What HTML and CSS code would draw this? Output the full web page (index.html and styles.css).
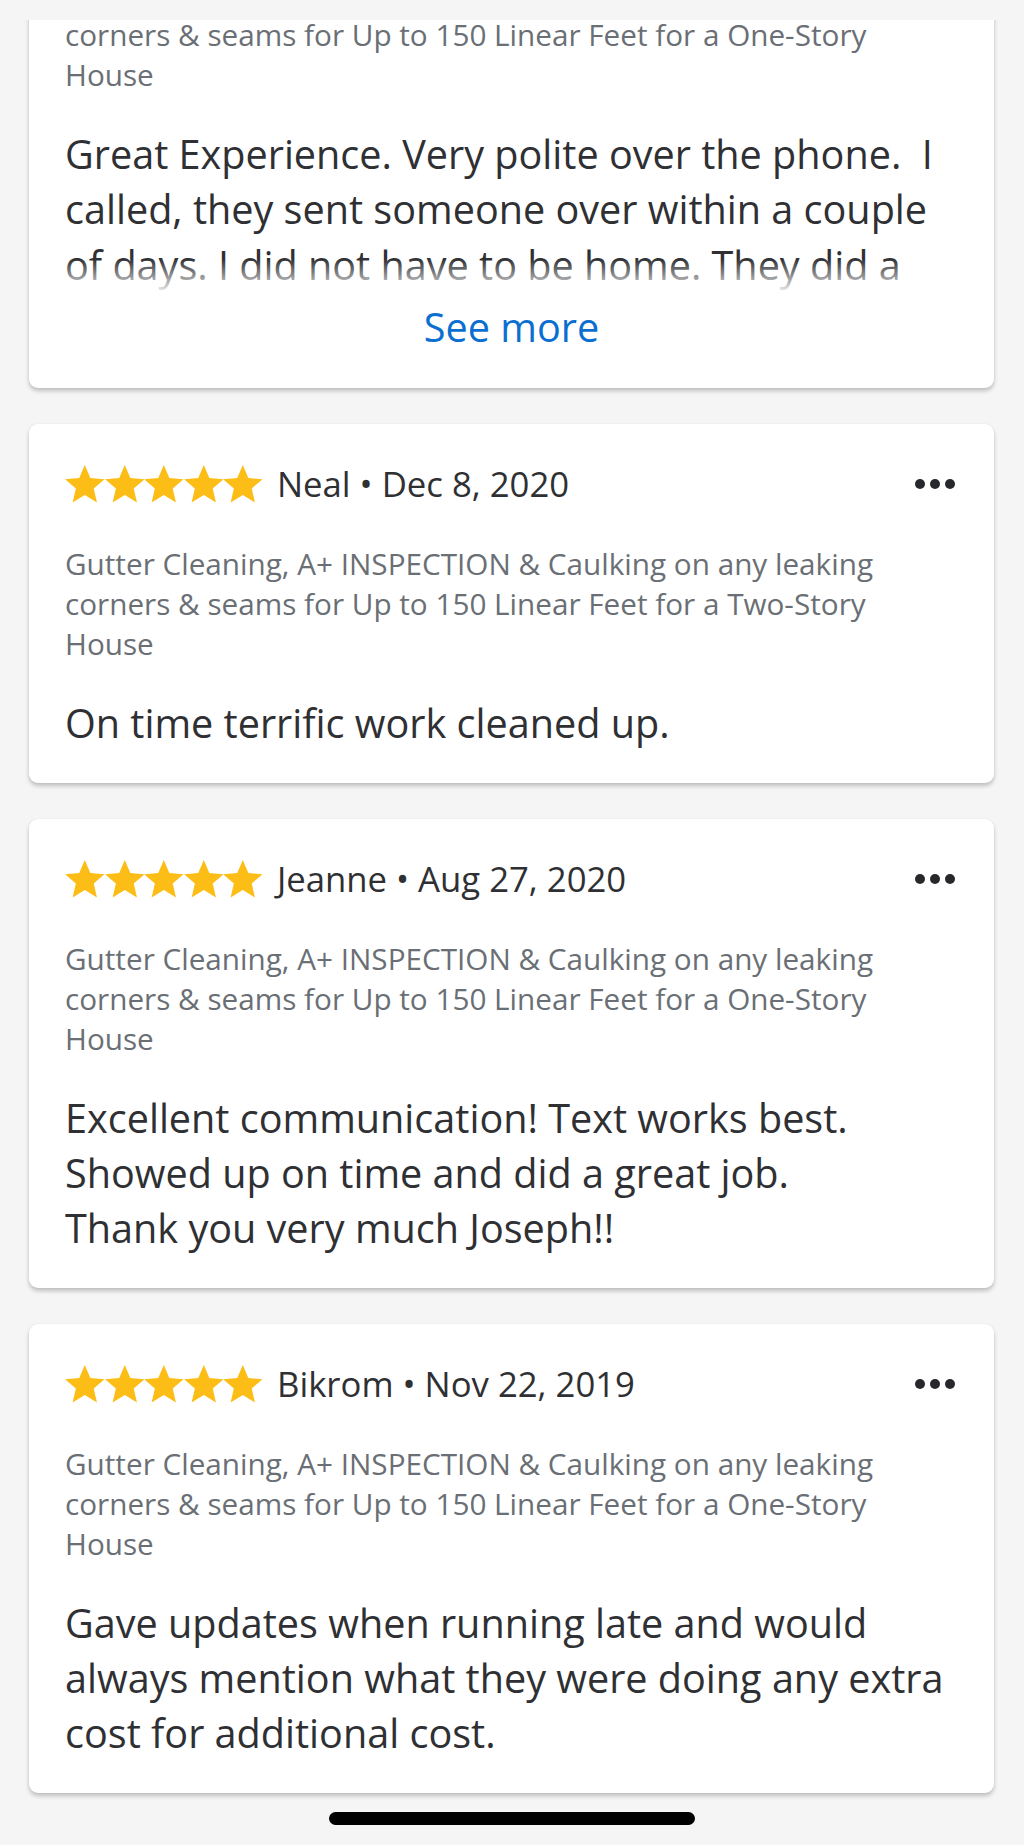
FILE: index.html
```html
<!DOCTYPE html>
<html lang="en">
<head>
<meta charset="utf-8">
<title>Reviews</title>
<link rel="stylesheet" href="styles.css">
</head>
<body>
<div class="screen">
  <div class="viewport">
    <div class="list">
      <article class="card card-partial">
        <p class="service">Gutter Cleaning, A+ INSPECTION &amp; Caulking on any leaking corners &amp; seams for Up to 150 Linear Feet for a One-Story House</p>
        <div class="clamp">
          <p class="review">Great Experience. Very polite over the phone.&nbsp; I called, they sent someone over within a couple of days. I did not have to be home. They did a great job and were very thorough.</p>
        </div>
        <a class="see-more">See more</a>
      </article>

      <article class="card">
        <div class="head">
          <div class="stars">
            <svg viewBox="2 2 20 19.3"><path d="M12 17.27L18.18 21l-1.64-7.03L22 9.24l-7.19-.61L12 2 9.19 8.63 2 9.24l5.46 4.73L5.82 21z"/></svg>
            <svg viewBox="2 2 20 19.3"><path d="M12 17.27L18.18 21l-1.64-7.03L22 9.24l-7.19-.61L12 2 9.19 8.63 2 9.24l5.46 4.73L5.82 21z"/></svg>
            <svg viewBox="2 2 20 19.3"><path d="M12 17.27L18.18 21l-1.64-7.03L22 9.24l-7.19-.61L12 2 9.19 8.63 2 9.24l5.46 4.73L5.82 21z"/></svg>
            <svg viewBox="2 2 20 19.3"><path d="M12 17.27L18.18 21l-1.64-7.03L22 9.24l-7.19-.61L12 2 9.19 8.63 2 9.24l5.46 4.73L5.82 21z"/></svg>
            <svg viewBox="2 2 20 19.3"><path d="M12 17.27L18.18 21l-1.64-7.03L22 9.24l-7.19-.61L12 2 9.19 8.63 2 9.24l5.46 4.73L5.82 21z"/></svg>
          </div>
          <span class="who">Neal • Dec 8, 2020</span>
          <span class="more"><i></i><i></i><i></i></span>
        </div>
        <p class="service">Gutter Cleaning, A+ INSPECTION &amp; Caulking on any leaking corners &amp; seams for Up to 150 Linear Feet for a Two-Story House</p>
        <p class="review">On time terrific work cleaned up.</p>
      </article>

      <article class="card">
        <div class="head">
          <div class="stars">
            <svg viewBox="2 2 20 19.3"><path d="M12 17.27L18.18 21l-1.64-7.03L22 9.24l-7.19-.61L12 2 9.19 8.63 2 9.24l5.46 4.73L5.82 21z"/></svg>
            <svg viewBox="2 2 20 19.3"><path d="M12 17.27L18.18 21l-1.64-7.03L22 9.24l-7.19-.61L12 2 9.19 8.63 2 9.24l5.46 4.73L5.82 21z"/></svg>
            <svg viewBox="2 2 20 19.3"><path d="M12 17.27L18.18 21l-1.64-7.03L22 9.24l-7.19-.61L12 2 9.19 8.63 2 9.24l5.46 4.73L5.82 21z"/></svg>
            <svg viewBox="2 2 20 19.3"><path d="M12 17.27L18.18 21l-1.64-7.03L22 9.24l-7.19-.61L12 2 9.19 8.63 2 9.24l5.46 4.73L5.82 21z"/></svg>
            <svg viewBox="2 2 20 19.3"><path d="M12 17.27L18.18 21l-1.64-7.03L22 9.24l-7.19-.61L12 2 9.19 8.63 2 9.24l5.46 4.73L5.82 21z"/></svg>
          </div>
          <span class="who">Jeanne • Aug 27, 2020</span>
          <span class="more"><i></i><i></i><i></i></span>
        </div>
        <p class="service">Gutter Cleaning, A+ INSPECTION &amp; Caulking on any leaking corners &amp; seams for Up to 150 Linear Feet for a One-Story House</p>
        <p class="review">Excellent communication! Text works best.<br>Showed up on time and did a great job.<br>Thank you very much Joseph!!</p>
      </article>

      <article class="card">
        <div class="head">
          <div class="stars">
            <svg viewBox="2 2 20 19.3"><path d="M12 17.27L18.18 21l-1.64-7.03L22 9.24l-7.19-.61L12 2 9.19 8.63 2 9.24l5.46 4.73L5.82 21z"/></svg>
            <svg viewBox="2 2 20 19.3"><path d="M12 17.27L18.18 21l-1.64-7.03L22 9.24l-7.19-.61L12 2 9.19 8.63 2 9.24l5.46 4.73L5.82 21z"/></svg>
            <svg viewBox="2 2 20 19.3"><path d="M12 17.27L18.18 21l-1.64-7.03L22 9.24l-7.19-.61L12 2 9.19 8.63 2 9.24l5.46 4.73L5.82 21z"/></svg>
            <svg viewBox="2 2 20 19.3"><path d="M12 17.27L18.18 21l-1.64-7.03L22 9.24l-7.19-.61L12 2 9.19 8.63 2 9.24l5.46 4.73L5.82 21z"/></svg>
            <svg viewBox="2 2 20 19.3"><path d="M12 17.27L18.18 21l-1.64-7.03L22 9.24l-7.19-.61L12 2 9.19 8.63 2 9.24l5.46 4.73L5.82 21z"/></svg>
          </div>
          <span class="who">Bikrom • Nov 22, 2019</span>
          <span class="more"><i></i><i></i><i></i></span>
        </div>
        <p class="service">Gutter Cleaning, A+ INSPECTION &amp; Caulking on any leaking corners &amp; seams for Up to 150 Linear Feet for a One-Story House</p>
        <p class="review">Gave updates when running late and would always mention what they were doing any extra cost for additional cost.</p>
      </article>
    </div>
  </div>
  <div class="home-indicator"></div>
</div>
</body>
</html>
```
FILE: styles.css
```css
* { box-sizing: border-box; }

html, body {
  margin: 0;
  padding: 0;
  background: #f5f5f5;
}

body {
  font-family: "Open Sans", "Noto Sans", sans-serif;
  color: #2f3033;
  -webkit-font-smoothing: antialiased;
}

.screen {
  position: relative;
  width: 1024px;
  height: 1845px;
  overflow: hidden;
}

.viewport {
  margin-top: 20px;
  height: 1825px;
  overflow: hidden;
}

.list {
  display: flex;
  flex-direction: column;
  gap: 36px;
  padding: 0 30px 0 29px;
}

.card {
  background: #fff;
  border-radius: 9px;
  padding: 36px 36px 32px;
  box-shadow: 0 3px 4px rgba(0, 0, 0, 0.22), 0 0 2px rgba(0, 0, 0, 0.06);
}

.card-partial {
  margin-top: -45px;
  padding-top: 0;
  padding-bottom: 33px;
  border-top-left-radius: 0;
  border-top-right-radius: 0;
}

.head {
  display: flex;
  align-items: center;
  height: 48px;
  margin-bottom: 36px;
}

.stars {
  display: flex;
}

.stars svg {
  width: 39.6px;
  height: 38px;
  fill: #fcbd17;
  display: block;
}

.who {
  margin-left: 14px;
  font-size: 34.7px;
  line-height: 48px;
  color: #2f3033;
}

.more {
  margin-left: auto;
  margin-right: 3px;
  display: flex;
  gap: 5px;
}

.more i {
  width: 10px;
  height: 10px;
  border-radius: 50%;
  background: #26282b;
}

.service {
  margin: 0;
  padding-right: 8px;
  font-size: 29.7px;
  line-height: 40px;
  color: #6a6f75;
}

.review {
  margin: 32px 0 0;
  padding-right: 8px;
  font-size: 39.6px;
  line-height: 55px;
  color: #2f3033;
}

.clamp {
  position: relative;
  margin-top: 32px;
  max-height: 166px;
  overflow: hidden;
}

.clamp .review {
  margin-top: 0;
  line-height: 55.3px;
}

.clamp::after {
  content: "";
  position: absolute;
  left: 0;
  right: 0;
  bottom: 0;
  height: 34px;
  background: linear-gradient(rgba(255, 255, 255, 0), rgba(255, 255, 255, 0.95));
}

.see-more {
  display: block;
  margin-top: 7px;
  text-align: center;
  font-size: 39.6px;
  line-height: 55px;
  color: #0b6fd1;
}

.home-indicator {
  position: absolute;
  left: 329px;
  bottom: 20px;
  width: 366px;
  height: 13px;
  border-radius: 7px;
  background: #000;
}
```
